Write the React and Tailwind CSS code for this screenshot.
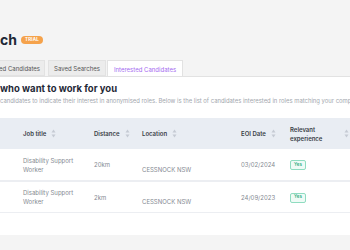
import { useState } from 'react'

const SortIcon = () => (
    <svg width="5" height="9" viewBox="0 0 5 9" className="shrink-0">
        <path d="M2.5 0.5 L4.5 3.5 L0.5 3.5 Z" fill="#c5cad3" />
        <path d="M2.5 8.5 L4.5 5.5 L0.5 5.5 Z" fill="#c5cad3" />
    </svg>
)

const rows = [
    { title: ['Disability Support', 'Worker'], distance: '20km', location: 'CESSNOCK NSW', date: '03/02/2024' },
    { title: ['Disability Support', 'Worker'], distance: '2km', location: 'CESSNOCK NSW', date: '24/09/2023' },
]

export default function App() {
    const [tab, setTab] = useState('interested')

    return (
        <div className="w-[350px] h-[250px] overflow-hidden bg-[#f4f4f4] font-['Inter',sans-serif] flex flex-col whitespace-nowrap">
            <div className="pt-[32px] flex items-center gap-[4px] h-[48px] box-border">
                <h1 className="text-[14px] leading-[16px] font-bold text-[#1f2937]">ch</h1>
                <span className="h-[8px] w-[22px] rounded-full bg-[#f5a24b] text-white text-[4.5px] font-bold flex items-center justify-center tracking-wide">TRIAL</span>
            </div>

            <div className="mt-[12px] flex items-end h-[16px]">
                <button className="h-[16px] w-[45px] pr-[4px] bg-[#ececec] border border-l-0 border-[#e2e2e2] text-[6px] text-[#555] flex items-center justify-end overflow-hidden">ed Candidates</button>
                <button
                    onClick={() => setTab('saved')}
                    className="ml-[3px] h-[16px] w-[58px] bg-[#ececec] border border-[#e2e2e2] text-[6px] text-[#555] flex items-center justify-center"
                >Saved Searches</button>
                <button
                    onClick={() => setTab('interested')}
                    className={`ml-[1px] h-[17px] w-[76px] -mb-[1px] bg-white border border-b-0 border-[#e2e2e2] text-[6px] flex items-center justify-center ${tab === 'interested' ? 'text-[#a66cf0]' : 'text-[#555]'}`}
                >Interested Candidates</button>
            </div>

            <div className="bg-white border-t border-[#e2e2e2] pt-[6px] pb-[22px]">
                <h2 className="text-[9.5px] leading-[12px] font-bold text-[#1f2937]">who want to work for you</h2>
                <p className="mt-[2px] text-[5.9px] leading-[8px] text-[#a3a7ae] overflow-hidden">candidates to indicate their interest in anonymised roles. Below is the list of candidates interested in roles matching your comp</p>

                <div className="mt-[13px]">
                    <div className="h-[31px] bg-[#e9edf3] flex items-center text-[6px] font-semibold text-[#3a3f47]">
                        <div className="w-[94px] pl-[23px] flex items-center gap-[5px]">Job title <SortIcon /></div>
                        <div className="w-[48px] flex items-center gap-[5px]">Distance <SortIcon /></div>
                        <div className="w-[99px] flex items-center gap-[5px]">Location <SortIcon /></div>
                        <div className="w-[49px] flex items-center gap-[5px]">EOI Date <SortIcon /></div>
                        <div className="flex-1 flex items-center justify-between pr-[1px]">
                            <div className="leading-[9px]">Relevant<br />experience</div>
                            <SortIcon />
                        </div>
                    </div>

                    {rows.map((r, i) => (
                        <div key={i} className={`flex items-center text-[6px] text-[#858a92] border-b border-[#eceef2] ${i === 0 ? 'h-[33px] border-b-2' : 'h-[31px]'}`}>
                            <div className="w-[94px] pl-[23px] leading-[9px]">{r.title[0]}<br />{r.title[1]}</div>
                            <div className="w-[48px]">{r.distance}</div>
                            <div className="w-[99px] pt-[9px]">{r.location}</div>
                            <div className="w-[49px]">{r.date}</div>
                            <div className="flex-1">
                                <span className="inline-flex items-center justify-center w-[16px] h-[10px] rounded-[2px] border border-[#8fdcc0] bg-[#effbf6] text-[#23a777] text-[4.5px] font-medium">Yes</span>
                            </div>
                        </div>
                    ))}
                </div>
            </div>
        </div>
    )
}
